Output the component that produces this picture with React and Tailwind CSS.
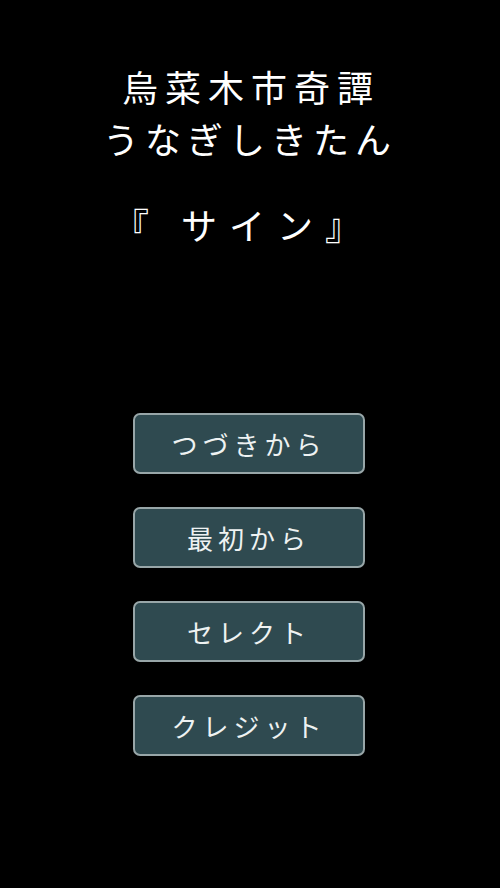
import React from "react";

const MENU = ["つづきから", "最初から", "セレクト", "クレジット"];

export default function App() {
  return (
    <div
      className="w-[500px] h-[888px] bg-black text-white flex flex-col items-center"
      style={{ fontFamily: '"Noto Sans CJK JP", "Noto Sans", sans-serif' }}
    >
      {/* タイトル */}
      <div className="mt-[60px] flex flex-col items-center text-[36px] leading-[52px]">
        <div className="tracking-[7px] pl-[2px]">烏菜木市奇譚</div>
        <div className="tracking-[6px]">うなぎしきたん</div>
      </div>
      <div className="mt-[34px] text-[36px] leading-[52px] tracking-[12px] pr-[14px]">
        『 サイン』
      </div>

      {/* メニュー */}
      <div className="mt-[163px] flex flex-col gap-[33px] pr-[2px]">
        {MENU.map(label => (
          <button
            key={label}
            className="w-[232px] h-[61px] rounded-[7px] border-2 border-[#98a6a8] bg-[#2f4a50] text-[#eef2f2] text-[26px] tracking-[5px] flex items-center justify-center"
          >
            {label}
          </button>
        ))}
      </div>
    </div>
  );
}
